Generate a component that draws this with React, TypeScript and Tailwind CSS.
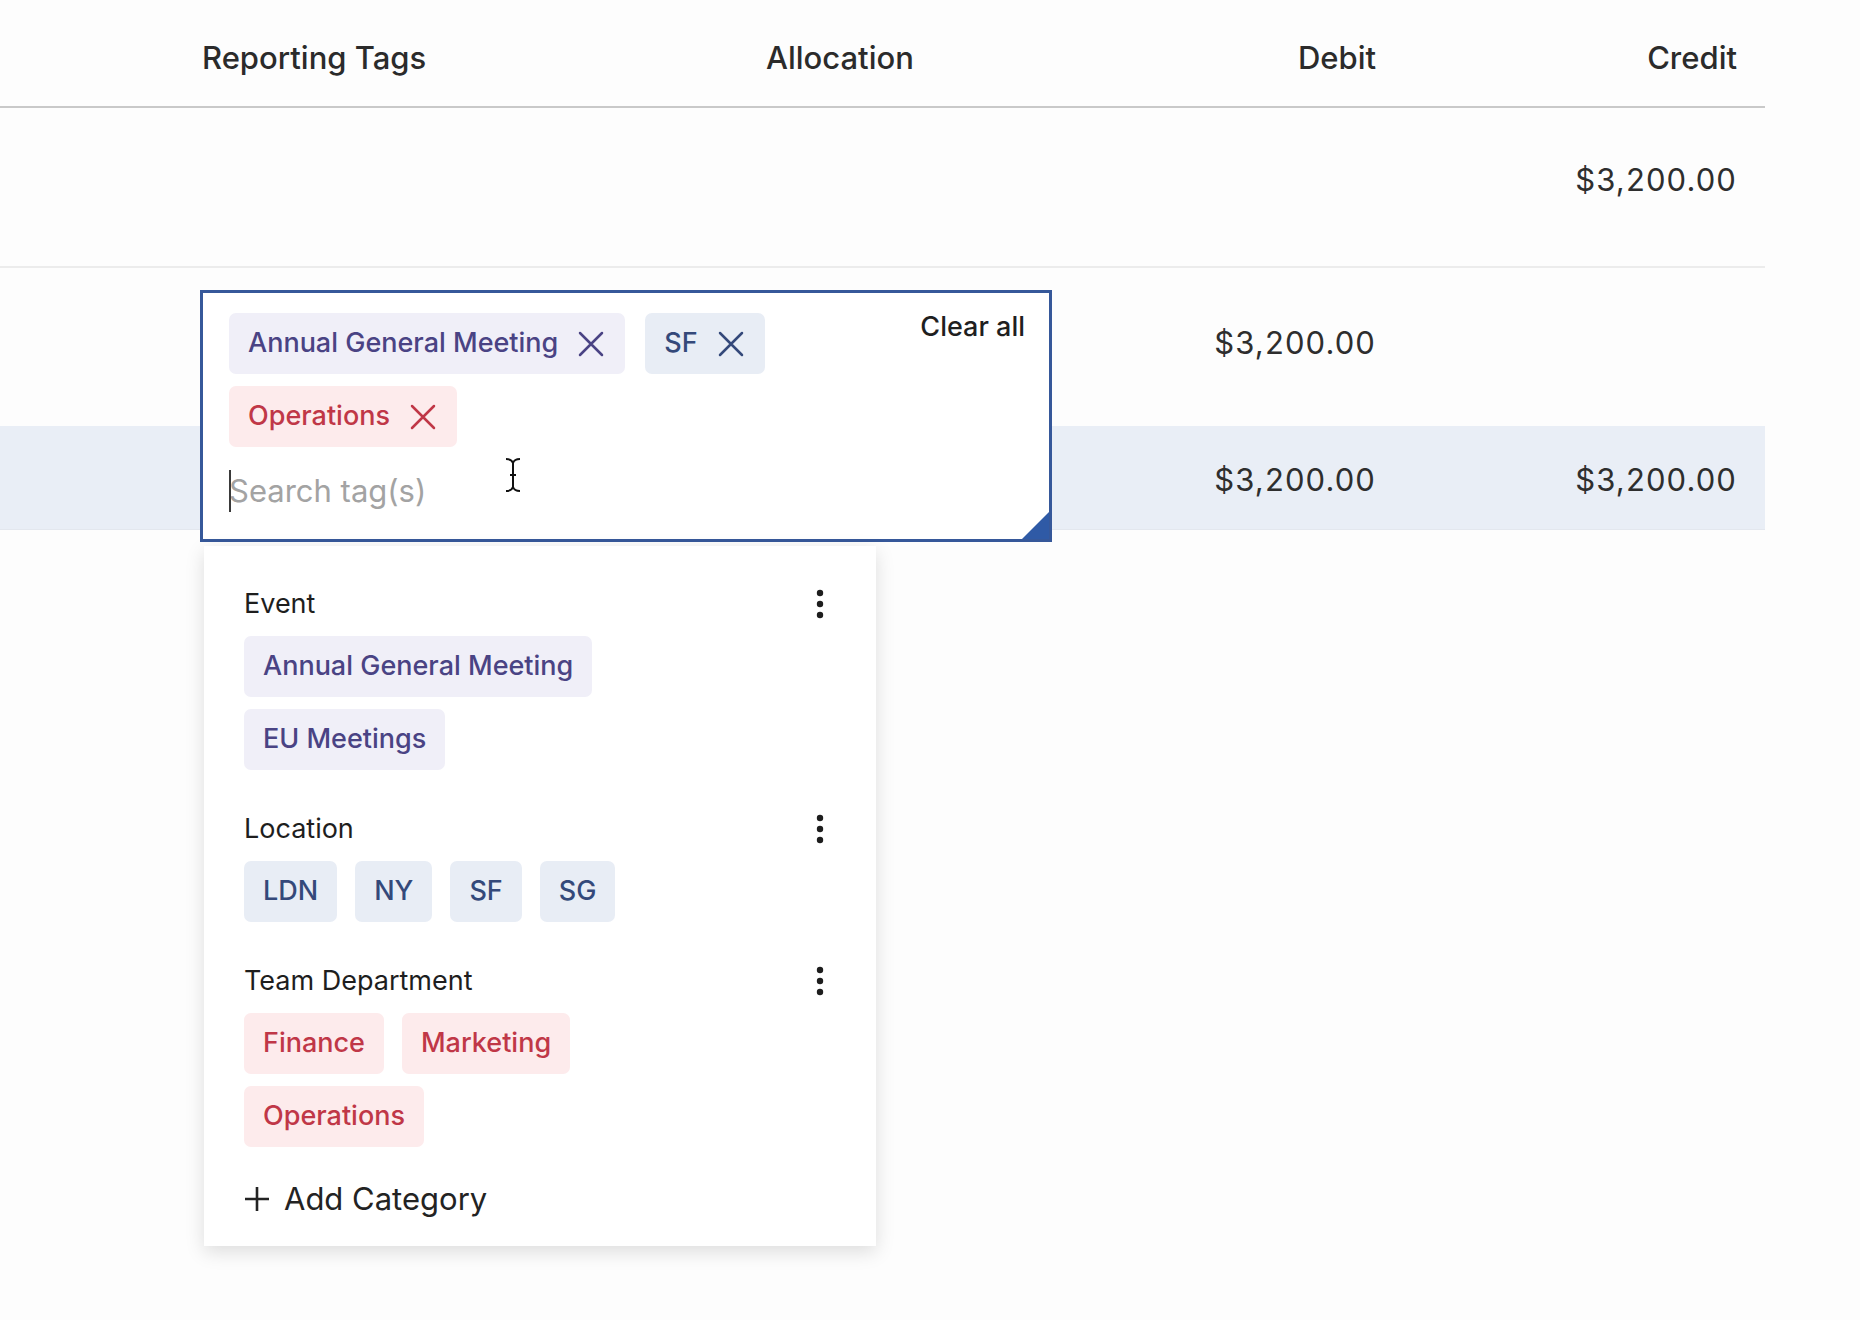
import React from "react";

type Tone = "purple" | "blue" | "red";

const toneClass: Record<Tone, string> = {
  purple: "bg-[#f0eff8] text-[#4a4384]",
  blue: "bg-[#e8edf5] text-[#34497a]",
  red: "bg-[#fdebec] text-[#c03747]",
};

function CloseIcon() {
  return (
    <svg width="26" height="26" viewBox="0 0 26 26" className="shrink-0">
      <path d="M2 2L24 24M24 2L2 24" stroke="currentColor" strokeWidth="2.5" strokeLinecap="round" fill="none" />
    </svg>
  );
}

function Kebab() {
  return (
    <svg width="10" height="32" viewBox="0 0 10 32" className="shrink-0">
      <circle cx="5" cy="5" r="3.2" fill="#1d1d1d" />
      <circle cx="5" cy="16" r="3.2" fill="#1d1d1d" />
      <circle cx="5" cy="27" r="3.2" fill="#1d1d1d" />
    </svg>
  );
}

function Chip({ label, tone, removable }: { label: string; tone: Tone; removable?: boolean }) {
  return (
    <div
      className={`flex h-[61px] items-center gap-[20px] rounded-[7px] pl-[19px] ${removable ? "pr-[21px]" : "pr-[19px]"} text-[27px] font-medium ${toneClass[tone]}`}
    >
      <span>{label}</span>
      {removable && <CloseIcon />}
    </div>
  );
}

function Category({ title, tone, tags }: { title: string; tone: Tone; tags: string[] }) {
  return (
    <div className="flex flex-col">
      <div className="flex h-[30px] items-center justify-between pr-[11px]">
        <span className="text-[27px] text-[#1e1e1e]">{title}</span>
        <Kebab />
      </div>
      <div className="mt-[17px] flex w-[470px] flex-wrap gap-x-[18px] gap-y-[12px]">
        {tags.map((t) => (
          <Chip key={t} label={t} tone={tone} />
        ))}
      </div>
    </div>
  );
}

const cols = "grid grid-cols-[202px_564px_334px_276px_361px_28px]";

export default function App() {
  return (
    <div className="min-h-screen w-full bg-[#fdfdfd] font-['Inter',sans-serif] text-[#2e2e2e]">
      <div className="relative w-[1765px]">
        {/* column headings */}
        <div className={`${cols} h-[108px] items-center border-b-2 border-[#c9c9c9] pt-[10px] text-[31px] font-medium text-[#2b2b2b]`}>
          <div />
          <div>Reporting Tags</div>
          <div>Allocation</div>
          <div className="text-right">Debit</div>
          <div className="text-right">Credit</div>
          <div />
        </div>

        {/* ledger lines */}
        <div className={`${cols} h-[160px] items-center border-b-2 border-[#ececec] pb-[14px] text-[31px] tracking-[1.1px]`}>
          <div />
          <div />
          <div />
          <div />
          <div className="text-right">$3,200.00</div>
          <div />
        </div>
        <div className={`${cols} h-[158px] items-center pb-[8px] text-[31px] tracking-[1.1px]`}>
          <div />
          <div />
          <div />
          <div className="text-right">$3,200.00</div>
          <div />
          <div />
        </div>
        <div className={`${cols} h-[104px] items-center border-b border-[#e3e7ee] bg-[#e9eef6] pt-[6px] text-[31px] tracking-[1.1px]`}>
          <div />
          <div />
          <div />
          <div className="text-right">$3,200.00</div>
          <div className="text-right">$3,200.00</div>
          <div />
        </div>

        {/* tag editor */}
        <div className="absolute left-[200px] top-[290px] h-[252px] w-[852px] border-[3px] border-[#36589a] bg-white">
          <div className="relative h-full pl-[26px] pt-[20px]">
            <div className="flex w-[680px] flex-wrap gap-x-[20px] gap-y-[12px]">
              <Chip label="Annual General Meeting" tone="purple" removable />
              <Chip label="SF" tone="blue" removable />
              <Chip label="Operations" tone="red" removable />
            </div>
            <div className="relative mt-[22px] flex h-[44px] items-center">
              <span className="absolute left-0 top-[1px] h-[42px] w-[2px] bg-[#3a3a3a]" />
              <span className="text-[31px] text-[#a3a3a3]">Search tag(s)</span>
              <svg width="18" height="36" viewBox="0 0 18 36" className="absolute left-[275px] top-[-12px]">
                <path d="M2 2C6 2 8 3 9 6M16 2C12 2 10 3 9 6M9 6V30M2 34C6 34 8 33 9 30M16 34C12 34 10 33 9 30M6 18H12" stroke="#111" strokeWidth="2" fill="none" />
              </svg>
            </div>
            <button className="absolute right-[24px] top-[14px] text-[27px] font-medium text-[#1f1f1f]">Clear all</button>
            <svg width="27" height="27" viewBox="0 0 27 27" className="absolute bottom-0 right-0">
              <path d="M27 0V27H0Z" fill="#2f5aa6" />
            </svg>
          </div>
        </div>

        {/* tag picker */}
        <div className="absolute left-[204px] top-[546px] flex w-[672px] flex-col gap-[44px] bg-white px-[40px] pb-[30px] pt-[43px] shadow-[0_6px_18px_rgba(0,0,0,0.13)]">
          <Category title="Event" tone="purple" tags={["Annual General Meeting", "EU Meetings"]} />
          <Category title="Location" tone="blue" tags={["LDN", "NY", "SF", "SG"]} />
          <div className="flex flex-col gap-[35px]">
            <Category title="Team Department" tone="red" tags={["Finance", "Marketing", "Operations"]} />
            <button className="flex h-[34px] items-center gap-[14px] text-[31px] text-[#232323]">
              <svg width="26" height="26" viewBox="0 0 26 26">
                <path d="M13 1V25M1 13H25" stroke="#232323" strokeWidth="2.6" fill="none" />
              </svg>
              <span>Add Category</span>
            </button>
          </div>
        </div>
      </div>
    </div>
  );
}
